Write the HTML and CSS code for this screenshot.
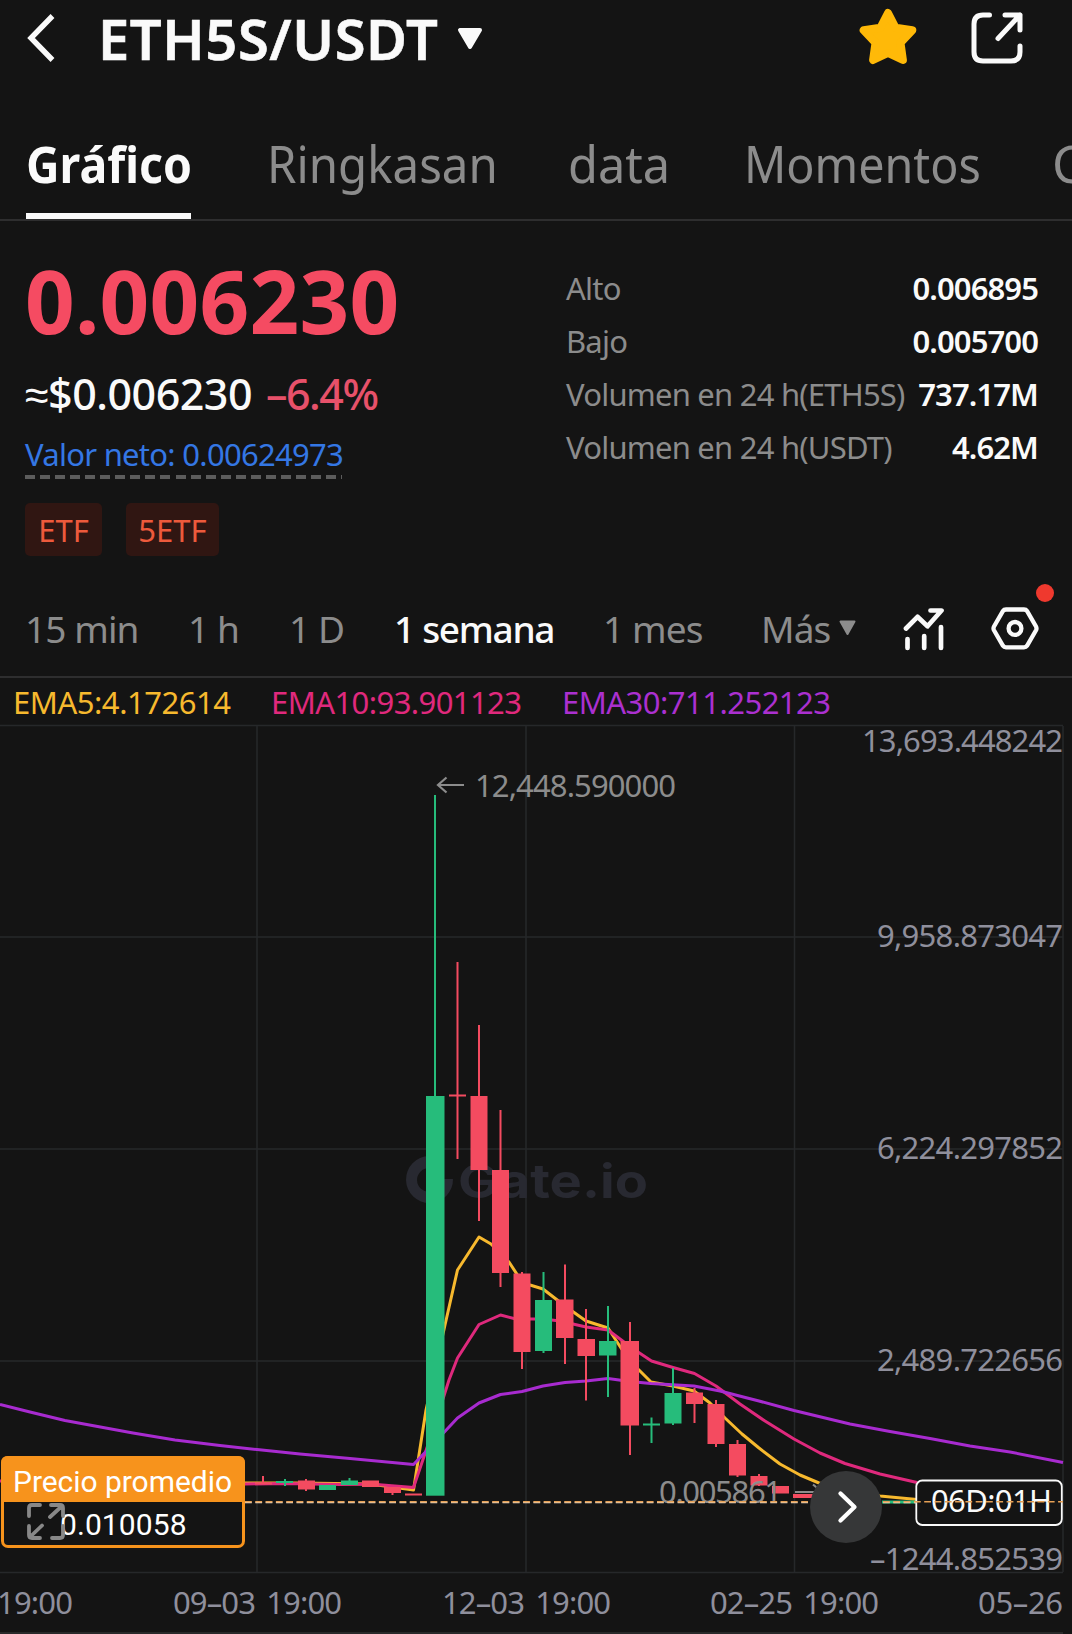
FILE: index.html
```html
<!DOCTYPE html>
<html lang="es">
<head>
<meta charset="utf-8">
<title>ETH5S/USDT</title>
<link rel="stylesheet" href="styles.css">
</head>
<body>
<main class="app">
  <header class="topbar">
    <svg class="back" width="30" height="50" viewBox="0 0 30 50"><path d="M25.5 3 L4 25 L25.5 47" fill="none" stroke="#fafafa" stroke-width="5.400"/></svg>
    <h1 class="pair">ETH5S/USDT</h1>
    <svg class="caret" width="26" height="22" viewBox="0 0 26 22"><path d="M3 2 H23 L13 19 Z" fill="#fafafa" stroke="#fafafa" stroke-width="4" stroke-linejoin="round"/></svg>
    <svg class="star" width="58" height="58" viewBox="0 0 58 58"><path d="M29 5 L36.6 19.8 L53.3 22.2 L41.5 34.8 L43.9 52 L29 45 L14.1 52 L16.5 34.8 L4.7 22.2 L21.4 19.8 Z" fill="#ffb908" stroke="#ffb908" stroke-width="8" stroke-linejoin="round"/></svg>
    <svg class="share" width="52" height="52" viewBox="0 0 52 52" fill="none" stroke="#fafafa" stroke-width="5" stroke-linecap="round" stroke-linejoin="round"><path d="M18.500 3 H12 Q3 3 3 12 V40 Q3 49 12 49 H40 Q49 49 49 40 V34"/><path d="M34 3 H49 V18 M49 3 L27 26.500"/></svg>
  </header>
  <nav class="tabs">
    <span class="tab tab-active"><span class="label l1">Gráfico</span></span>
    <span class="tab"><span class="label l2">Ringkasan</span></span>
    <span class="tab"><span class="label l3">data</span></span>
    <span class="tab"><span class="label l4">Momentos</span></span>
    <span class="tab"><span class="label">C</span></span>
  </nav>
  <section class="summary">
    <div class="quote">
      <div class="price">0.006230</div>
      <div class="approx"><span class="usd">≈$0.006230</span><span class="change">–6.4%</span></div>
      <div class="nav-value">Valor neto: 0.00624973</div>
      <div class="tags"><span class="tag">ETF</span><span class="tag tag-wide">5ETF</span></div>
    </div>
    <dl class="stats">
      <div class="stat"><dt>Alto</dt><dd>0.006895</dd></div>
      <div class="stat"><dt>Bajo</dt><dd>0.005700</dd></div>
      <div class="stat"><dt>Volumen en 24 h(ETH5S)</dt><dd>737.17M</dd></div>
      <div class="stat"><dt>Volumen en 24 h(USDT)</dt><dd>4.62M</dd></div>
    </dl>
  </section>
  <nav class="intervals">
    <span class="i1">15 min</span><span class="i2">1 h</span><span class="i3">1 D</span><span class="interval-active">1 semana</span><span class="i5">1 mes</span><span class="i6">Más</span>
    <svg class="more" width="17" height="16" viewBox="0 0 17 16"><path d="M1.500 1.500 H15.500 L8.500 14 Z" fill="#8c8c8c" stroke="#8c8c8c" stroke-width="2" stroke-linejoin="round"/></svg>
    <svg class="indicators" width="42" height="46" viewBox="0 0 42 46" fill="none" stroke="#fafafa" stroke-width="4.700" stroke-linecap="round"><path d="M3 22.500 L14.500 10.800 L24.500 20.300 L38.500 4.500 H27.500" stroke-linejoin="round"/><path d="M4.500 33 V42 M21.200 30 V42 M38 21 V42"/></svg>
    <span class="settings">
      <svg width="48" height="46" viewBox="0 0 48 46" fill="none" stroke="#fafafa"><path d="M15 3.500 H33 Q35 3.500 36 5 L45 20.500 Q46 22.400 45 24.300 L36 39.800 Q35 41.300 33 41.300 H15 Q13 41.300 12 39.800 L3 24.300 Q2 22.400 3 20.500 L12 5 Q13 3.500 15 3.500 Z" stroke-width="4.300"/><circle cx="24" cy="22.400" r="6.400" stroke-width="4.300"/></svg>
      <i class="dot"></i>
    </span>
  </nav>
  <svg class="chart" width="1072" height="956" viewBox="0 678 1072 956">
    <g class="legend">
      <text x="13" y="713.500" textLength="218" fill="#f7b92e">EMA5:4.172614</text>
      <text x="271" y="713.500" textLength="251" fill="#e0297d">EMA10:93.901123</text>
      <text x="562" y="713.500" textLength="269" fill="#ab30d0">EMA30:711.252123</text>
    </g>
    <path class="grid" d="M0 725.500 H1063 M0 937 H1063 M0 1149 H1063 M0 1361 H1063 M0 1572.500 H1063 M257 726 V1572 M526 726 V1572 M794.500 726 V1572 M1063 726 V1572"/>
    <path class="grid bottom" d="M0 1633 H1063"/>
    <g fill="#282931">
      <path d="M429 1156 A23.500 23.500 0 1 0 453 1179 H441 A12 12 0 1 1 429 1168 Z"/>
      <path d="M431 1168 H442 V1179 H431 Z"/>
      <text class="mark" x="458" y="1197.500" textLength="190" lengthAdjust="spacingAndGlyphs">Gate.io</text>
    </g>
    <g class="axis">
      <text x="862" y="751.500" textLength="201">13,693.448242</text>
      <text x="877" y="946.500" textLength="186">9,958.873047</text>
      <text x="877" y="1158.500" textLength="186">6,224.297852</text>
      <text x="877" y="1370.500" textLength="186">2,489.722656</text>
      <text x="870" y="1569.500" textLength="193">–1244.852539</text>
      <text x="-3" y="1613.500" textLength="76">19:00</text>
      <text x="173" y="1613.500" textLength="169">09–03 19:00</text>
      <text x="442" y="1613.500" textLength="169">12–03 19:00</text>
      <text x="710" y="1613.500" textLength="169">02–25 19:00</text>
      <text x="978" y="1613.500" textLength="85">05–26</text>
    </g>
    <g class="lines">
      <path stroke="#f7b92e" d="M245 1483 L300 1483 L370 1484 L413.500 1490 L426 1410 L445 1325 L457.500 1270 L479 1237 L491 1244 L509 1262 L522 1282 L530 1285 L543 1289 L565 1306 L586 1321 L608 1328 L621 1348 L638 1369 L651 1382 L673 1386 L694 1391 L710 1403 L725 1418 L742 1434 L759 1448 L780 1464 L800 1475 L819 1483 L850 1491 L880 1496 L917 1499.500"/>
      <path stroke="#df297d" d="M0 1481 L245 1484 L284 1483.500 L340 1484.500 L370 1484 L413.500 1487.500 L435 1424 L449 1380 L457.500 1358 L479 1324.500 L500.500 1315 L516 1319 L543 1319 L560 1321 L586 1327 L608 1330 L624 1342 L638 1352 L651.500 1361 L673 1367.500 L694.500 1373.500 L716 1386 L740 1404 L765 1421 L794 1439 L820 1453 L845 1463.500 L880 1474 L917 1482.500"/>
      <path stroke="#a82bd0" d="M0 1404.500 L30 1412 L65 1420.500 L133 1433 L175 1440 L220 1445.500 L257 1449.500 L300 1454 L350 1458.500 L413.500 1464.500 L435 1442 L457.500 1418 L479 1403 L500.500 1394.500 L522 1391.500 L543 1386 L565 1382.500 L586 1381 L608 1378.500 L630 1381.500 L651 1383.500 L694 1386 L720 1391 L759 1401 L794 1410.500 L850 1424 L890 1431.500 L930 1438.500 L970 1446 L1010 1452 L1063 1462.500"/>
    </g>
    <g fill="#26bc7b">
      <rect x="434" y="795" width="2" height="302"/><rect x="426" y="1096" width="18.500" height="399.700"/>
      <rect x="542.500" y="1272" width="2" height="81"/><rect x="535" y="1300" width="17" height="51"/>
      <rect x="607" y="1306" width="2" height="91"/><rect x="599" y="1341" width="17.500" height="14.500"/>
      <rect x="650.500" y="1417.500" width="2" height="25.500"/><rect x="643" y="1423.500" width="17" height="2"/>
      <rect x="672" y="1368" width="2" height="57"/><rect x="664.500" y="1393" width="17" height="30.500"/>
      <rect x="276" y="1481" width="17" height="2"/><rect x="284" y="1479" width="2" height="7"/>
      <rect x="319" y="1485" width="17" height="5"/>
      <rect x="341" y="1480.500" width="17" height="4.500"/><rect x="348.500" y="1478" width="2" height="4"/>
      <rect x="882" y="1500.500" width="35" height="3"/>
    </g>
    <g fill="#f44b60">
      <rect x="262" y="1476" width="2" height="8"/><rect x="255" y="1482.500" width="17" height="2"/>
      <rect x="298" y="1480.500" width="17" height="9"/><rect x="305" y="1479" width="2" height="12"/>
      <rect x="362" y="1480.500" width="17" height="6.500"/>
      <rect x="384" y="1487" width="17" height="6"/><rect x="391.500" y="1490" width="2" height="5"/>
      <rect x="405" y="1493.500" width="17" height="2"/>
      <rect x="456.500" y="962" width="2" height="197"/><rect x="449" y="1094.500" width="17" height="2"/>
      <rect x="478" y="1025" width="2" height="196"/><rect x="470.500" y="1096" width="17" height="74"/>
      <rect x="499.500" y="1110" width="2" height="177"/><rect x="492" y="1170" width="17" height="103"/>
      <rect x="521" y="1272" width="2" height="97"/><rect x="513.500" y="1273.500" width="17" height="78.500"/>
      <rect x="564" y="1264.500" width="2" height="99.500"/><rect x="556" y="1299.500" width="17.500" height="38.500"/>
      <rect x="585" y="1309" width="2" height="91.500"/><rect x="577.500" y="1339" width="17.500" height="17"/>
      <rect x="629" y="1322" width="2" height="133"/><rect x="620.500" y="1341" width="18.500" height="84.500"/>
      <rect x="693.500" y="1388" width="2" height="35"/><rect x="686" y="1392.500" width="17" height="11.500"/>
      <rect x="715" y="1400" width="2" height="47"/><rect x="707.500" y="1404" width="17" height="40"/>
      <rect x="736.500" y="1440" width="2" height="37"/><rect x="729" y="1444" width="17" height="31.500"/>
      <rect x="758" y="1474" width="2" height="12"/><rect x="750.500" y="1476" width="17" height="9.500"/>
      <rect x="772" y="1486" width="17" height="7.500"/><rect x="793" y="1494" width="22" height="4"/>
    </g>
    <g class="note">
      <text x="475" y="796.500" textLength="201">12,448.590000</text>
      <text x="659" y="1503" textLength="123">0.005861</text>
      <path d="M464 785 H438 M446.500 777.500 L438 785 L446.500 792.500 M795 1492 H822 M813 1484.500 L822 1492 L813 1499.500"/>
    </g>
    <g class="next">
      <circle cx="846" cy="1507" r="36" fill="#363738"/>
      <path d="M840.500 1493.500 L854.500 1507 L840.500 1520.500" fill="none" stroke="#fff" stroke-width="4.300" stroke-linecap="round" stroke-linejoin="round"/>
    </g>
    <rect x="916.300" y="1480.500" width="145.500" height="44.500" rx="6" fill="#141414" stroke="#fafafa" stroke-width="1.800"/>
    <text class="count" x="931" y="1512" textLength="121">06D:01H</text>
    <g fill="none" stroke-dasharray="6.800 3.500">
      <path d="M245 1502.500 H810 M883 1502.500 H917" stroke="#e8d9c8" stroke-width="1.500"/>
      <path d="M245 1501.700 H810 M883 1501.700 H1063" stroke="#e6a055" stroke-width="1.500"/>
    </g>
    <g class="average">
      <rect x="2.500" y="1457.500" width="241" height="89" rx="5.500" fill="#141414" stroke="#f7931c" stroke-width="3"/>
      <path d="M1 1502 V1463 Q1 1456 8 1456 H238 Q245 1456 245 1463 V1502 Z" fill="#f7931c"/>
      <text x="13" y="1492" textLength="219">Precio promedio</text>
      <text x="60" y="1535" textLength="126.500">0.010058</text>
      <path d="M29 1516 V1508 Q29 1505 32 1505 H40 M51 1505 H60 Q63 1505 63 1508 V1516 M62 1506 L50 1517 M29 1526 V1535 Q29 1538 32 1538 H40 M30 1537 L42 1525.500 M52 1538 H60 Q63 1538 63 1535 V1526" fill="none" stroke="#888" stroke-width="3.800" stroke-linecap="round"/>
    </g>
  </svg>
</main>
</body>
</html>
```

FILE: styles.css
```css
* { box-sizing: border-box; }
body { margin: 0; background: #141414; color: #fafafa; font-family: "Noto Sans", sans-serif; }
.app { width: 1072px; height: 1634px; overflow: hidden; }
svg { display: block; flex: none; }
.topbar { display: flex; height: 118px; padding-left: 27px; }
.back { margin-top: 13px; }
.pair { width: 354px; margin: 0 0 0 41px; font-size: 56px; line-height: 76px; font-weight: 600; white-space: nowrap; letter-spacing: 0.600px; -webkit-text-stroke: 0.600px #fafafa; }
.caret { margin: 28px 0 0 5px; }
.star { margin: 8px 0 0 376px; }
.share { margin: 12px 0 0 54px; }
.tabs { display: grid; grid-template-columns: 241px 301px 176px 308px 40px; height: 103px; padding-left: 26px; border-bottom: 2px solid #2e2e2f; font-size: 51px; line-height: 91px; color: #8c8c8c; white-space: nowrap; }
.tab-active { width: 165px; height: 101px; font-weight: 700; color: #fafafa; border-bottom: 6px solid #fafafa; }
.label { display: inline-block; transform-origin: 0 50%; }
.l1 { transform: scaleX(0.910); }
.l2 { transform: scaleX(0.930); }
.l3 { transform: scaleX(0.955); }
.l4 { transform: scaleX(0.915); }
.summary { display: flex; height: 357px; padding: 28px 34px 0 25px; }
.quote { flex: none; width: 541px; }
.price { font-size: 87px; line-height: 102px; letter-spacing: 0.200px; font-weight: 700; color: #f54b62; }
.approx { display: flex; font-size: 43px; line-height: 60px; margin-top: 13px; font-weight: 500; white-space: nowrap; letter-spacing: -0.500px; }
.usd { width: 241px; }
.change { color: #e7516a; letter-spacing: -1.500px; }
.nav-value { width: 317px; height: 48px; margin-top: 7px; font-size: 31px; line-height: 47px; letter-spacing: -0.720px; color: #3477e4; white-space: nowrap; background: repeating-linear-gradient(90deg, #5c5c5c 0 10px, transparent 10px 15.050px) 0 100% / 100% 4px no-repeat; }
.tags { display: flex; gap: 24px; margin-top: 24px; }
.tag { width: 77px; height: 53px; border-radius: 5px; background: #301612; color: #ed5a3c; font-size: 31px; line-height: 54px; text-align: center; }
.tag-wide { width: 93px; }
.stats { flex: 1; margin: 12.500px 0 0; font-size: 31px; }
.stat { display: flex; justify-content: space-between; height: 53px; line-height: 53px; white-space: nowrap; }
.stat dt { color: #8c8c8c; letter-spacing: -0.780px; }
.stat dd { margin: 0; font-weight: 600; letter-spacing: -0.900px; }
.intervals { display: flex; height: 100px; border-bottom: 2px solid #2e2e2f; font-size: 37px; line-height: 101px; color: #8c8c8c; padding-left: 25px; white-space: nowrap; letter-spacing: -0.900px; }
.intervals > span { flex: none; }
.i1 { width: 163px; }
.i2 { width: 101px; }
.i3 { width: 105px; }
.interval-active { width: 209px; color: #fafafa; font-weight: 500; letter-spacing: -1.300px; }
.i5 { width: 158px; }
.i6 { width: 78px; }
.more { margin-top: 42px; }
.indicators { margin: 28px 0 0 47px; }
.settings { position: relative; margin: 27.500px 0 0 46px; line-height: 0; }
.dot { position: absolute; right: -15px; top: -22px; width: 18px; height: 18px; border-radius: 50%; background: #ef392e; }
.chart { font-family: "Noto Sans", sans-serif; font-size: 31px; }
.grid { fill: none; stroke: #26282a; stroke-width: 1.500; }
.bottom { stroke: #303030; }
.mark { font-family: Inter, sans-serif; font-size: 47px; font-weight: 700; }
.axis { fill: #8f8f9c; word-spacing: 4px; }
.lines { fill: none; stroke-width: 3; stroke-linejoin: round; }
.note { fill: #8c8c8c; }
.note path { fill: none; stroke: #8c8c8c; stroke-width: 2.200; }
.count { fill: #fafafa; }
.average { font-family: Roboto, sans-serif; font-size: 30px; fill: #fff; }
```
